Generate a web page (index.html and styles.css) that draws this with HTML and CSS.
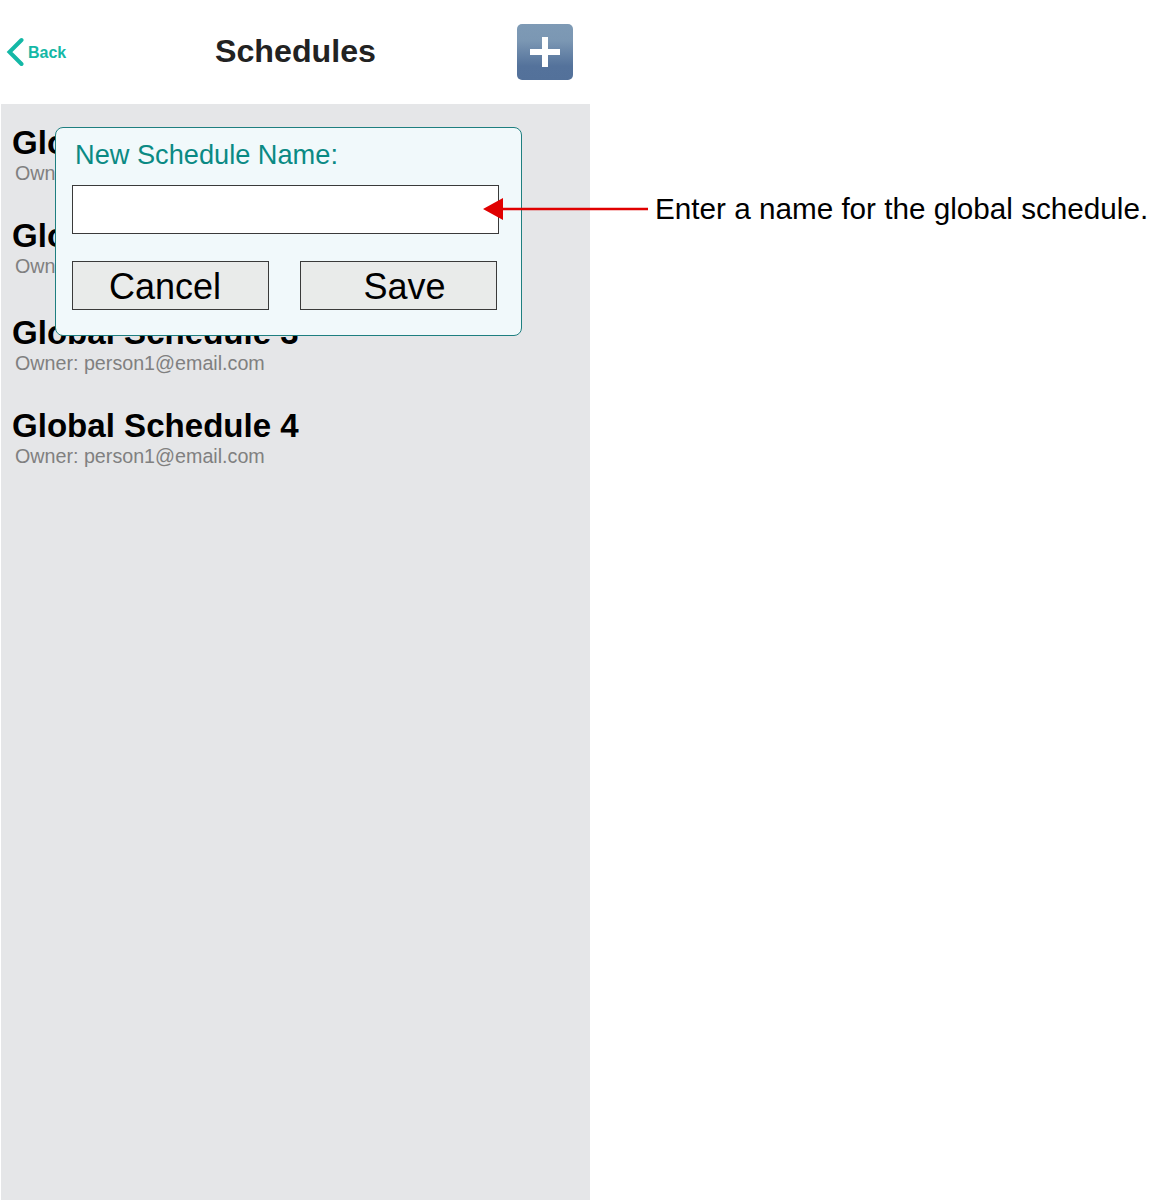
FILE: index.html
```html
<!DOCTYPE html>
<html lang="en">
<head>
    <meta charset="UTF-8">
    <title>Schedules</title>
    <link rel="stylesheet" href="styles.css">
</head>
<body>
    <div class="page">
        <div class="phone">
            <div class="top-bar">
                <a class="back-link">
                    <svg width="18" height="30" viewBox="0 0 18 30"><path d="M15.500 3 L3.500 15 L15.500 27" fill="none" stroke="#14b8a6" stroke-width="4" stroke-linecap="round" stroke-linejoin="miter"/></svg>
                    <span>Back</span>
                </a>
                <div class="top-title">Schedules</div>
                <button class="add-btn" type="button">
                    <svg width="30" height="30" viewBox="0 0 30 30"><path d="M12 0h6v12h12v6h-12v12h-6v-12h-12v-6h12z" fill="#fff"/></svg>
                </button>
            </div>
            <div class="schedule-list">
                <div class="schedule-item">
                    <div class="schedule-name">Global Schedule 1</div>
                    <div class="schedule-owner">Owner: person1@email.com</div>
                </div>
                <div class="schedule-item schedule-item-tall">
                    <div class="schedule-name">Global Schedule 2</div>
                    <div class="schedule-owner">Owner: person1@email.com</div>
                </div>
                <div class="schedule-item">
                    <div class="schedule-name">Global Schedule 3</div>
                    <div class="schedule-owner">Owner: person1@email.com</div>
                </div>
                <div class="schedule-item">
                    <div class="schedule-name">Global Schedule 4</div>
                    <div class="schedule-owner">Owner: person1@email.com</div>
                </div>
            </div>

            <!-- popup over the list -->
            <div class="dialog">
                <div class="dialog-title">New Schedule Name:</div>
                <input class="dialog-input" type="text">
                <div class="dialog-buttons">
                    <button class="dialog-btn dialog-btn-cancel" type="button">Cancel</button>
                    <button class="dialog-btn dialog-btn-save" type="button">Save</button>
                </div>
            </div>
        </div>

        <div class="callout">
            <svg class="callout-arrow" width="165" height="24" viewBox="0 0 165 24"><path d="M0 12 L20 1 L20 10.700 L165 10.700 L165 13.300 L20 13.300 L20 23 Z" fill="#e00000"/></svg>
            <span class="callout-text">Enter a name for the global schedule.</span>
        </div>
    </div>
</body>
</html>
```

FILE: styles.css
```css
body, html {
    margin: 0;
    padding: 0;
    background: #fff;
    font-family: "Liberation Sans", Arial, sans-serif;
}
.page {
    position: relative;
    width: 1150px;
    height: 1201px;
    overflow: hidden;
}
.phone {
    position: relative;
    width: 589px;
    height: 1200px;
    margin-left: 1px;
    display: flex;
    flex-direction: column;
}
.top-bar {
    height: 104px;
    flex: none;
    display: flex;
    align-items: center;
    justify-content: space-between;
    padding: 0 17px 0 5px;
    position: relative;
}
.back-link {
    display: flex;
    align-items: center;
    gap: 4px;
    color: #14b8a6;
    font-size: 16px;
    font-weight: bold;
}
.back-link span {
    padding-top: 1px;
}
.top-title {
    position: absolute;
    left: 214px;
    top: 31px;
    font-size: 32.200px;
    line-height: 41px;
    font-weight: bold;
    color: #222;
}
.add-btn {
    width: 56px;
    height: 56px;
    padding: 0;
    border: none;
    border-radius: 5px;
    background: linear-gradient(#7e9ab5, #7b97b3 30%, #54729b 75%, #53719a);
    display: flex;
    align-items: center;
    justify-content: center;
}
.schedule-list {
    flex: 1;
    background: #e5e6e8;
    padding-top: 21px;
}
.schedule-item {
    height: 93px;
    padding-left: 11px;
}
.schedule-item-tall {
    height: 97px;
}
.schedule-name {
    font-size: 33.100px;
    line-height: 36px;
    font-weight: bold;
    color: #000;
}
.schedule-owner {
    font-size: 19.700px;
    line-height: 23px;
    color: #808080;
    margin: 1px 0 0 3px;
}
.dialog {
    position: absolute;
    left: 54px;
    top: 127px;
    width: 467px;
    height: 209px;
    box-sizing: border-box;
    border: 1px solid #1e7f80;
    border-radius: 8px;
    background: #f1f9fb;
    padding: 0 16px;
}
.dialog-title {
    font-size: 27.200px;
    line-height: 32px;
    color: #0a8a84;
    margin: 11px 0 0 3px;
}
.dialog-input {
    display: block;
    box-sizing: border-box;
    width: 427px;
    height: 49px;
    margin-top: 14px;
    border: 1px solid #3a3a3a;
    background: #fff;
    padding: 0;
}
.dialog-buttons {
    display: flex;
    gap: 31px;
    margin-top: 27px;
}
.dialog-btn {
    box-sizing: border-box;
    width: 197px;
    height: 49px;
    border: 1px solid #3a3a3a;
    background: #e9ebea;
    font-family: inherit;
    font-size: 36px;
    color: #000;
    padding: 2px 0 0;
}
.dialog-btn-cancel {
    padding-right: 11px;
}
.dialog-btn-save {
    padding-left: 12px;
}
.callout {
    position: absolute;
    left: 483px;
    top: 191px;
    display: flex;
    align-items: center;
}
.callout-arrow {
    flex: none;
}
.callout-text {
    font-size: 29.680px;
    line-height: 36px;
    color: #000;
    margin-left: 7px;
    white-space: nowrap;
}
```
